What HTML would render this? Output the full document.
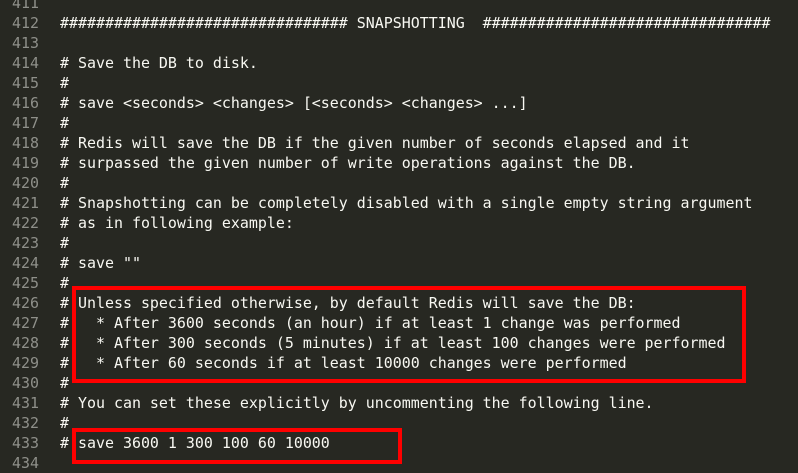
<!DOCTYPE html>
<html><head><style>
body{margin:0;width:798px;height:472px;background:#272822;overflow:hidden;position:relative;font-family:"DejaVu Sans Mono",monospace;font-size:14.95px;}
.l{position:absolute;left:0;height:20px;line-height:20px;white-space:pre;}
.n{position:absolute;left:0;width:39px;text-align:right;color:#8f908a;}
.t{position:absolute;left:60px;color:#f8f8f2;}
.box{position:absolute;border:4px solid #ff0000;box-sizing:border-box;}
</style></head><body>
<div class="l" style="top:-7px"><span class="n">411</span></div>
<div class="l" style="top:13px"><span class="n">412</span><span class="t">################################ SNAPSHOTTING  ################################</span></div>
<div class="l" style="top:33px"><span class="n">413</span></div>
<div class="l" style="top:53px"><span class="n">414</span><span class="t"># Save the DB to disk.</span></div>
<div class="l" style="top:73px"><span class="n">415</span><span class="t">#</span></div>
<div class="l" style="top:93px"><span class="n">416</span><span class="t"># save &lt;seconds&gt; &lt;changes&gt; [&lt;seconds&gt; &lt;changes&gt; ...]</span></div>
<div class="l" style="top:113px"><span class="n">417</span><span class="t">#</span></div>
<div class="l" style="top:133px"><span class="n">418</span><span class="t"># Redis will save the DB if the given number of seconds elapsed and it</span></div>
<div class="l" style="top:153px"><span class="n">419</span><span class="t"># surpassed the given number of write operations against the DB.</span></div>
<div class="l" style="top:173px"><span class="n">420</span><span class="t">#</span></div>
<div class="l" style="top:193px"><span class="n">421</span><span class="t"># Snapshotting can be completely disabled with a single empty string argument</span></div>
<div class="l" style="top:213px"><span class="n">422</span><span class="t"># as in following example:</span></div>
<div class="l" style="top:233px"><span class="n">423</span><span class="t">#</span></div>
<div class="l" style="top:253px"><span class="n">424</span><span class="t"># save ""</span></div>
<div class="l" style="top:273px"><span class="n">425</span><span class="t">#</span></div>
<div class="l" style="top:293px"><span class="n">426</span><span class="t"># Unless specified otherwise, by default Redis will save the DB:</span></div>
<div class="l" style="top:313px"><span class="n">427</span><span class="t">#   * After 3600 seconds (an hour) if at least 1 change was performed</span></div>
<div class="l" style="top:333px"><span class="n">428</span><span class="t">#   * After 300 seconds (5 minutes) if at least 100 changes were performed</span></div>
<div class="l" style="top:353px"><span class="n">429</span><span class="t">#   * After 60 seconds if at least 10000 changes were performed</span></div>
<div class="l" style="top:373px"><span class="n">430</span><span class="t">#</span></div>
<div class="l" style="top:393px"><span class="n">431</span><span class="t"># You can set these explicitly by uncommenting the following line.</span></div>
<div class="l" style="top:413px"><span class="n">432</span><span class="t">#</span></div>
<div class="l" style="top:433px"><span class="n">433</span><span class="t"># save 3600 1 300 100 60 10000</span></div>
<div class="l" style="top:453px"><span class="n">434</span></div>
<div class="box" style="left:72px;top:286px;width:674px;height:97px"></div>
<div class="box" style="left:72px;top:428px;width:330px;height:36px"></div>
</body></html>
